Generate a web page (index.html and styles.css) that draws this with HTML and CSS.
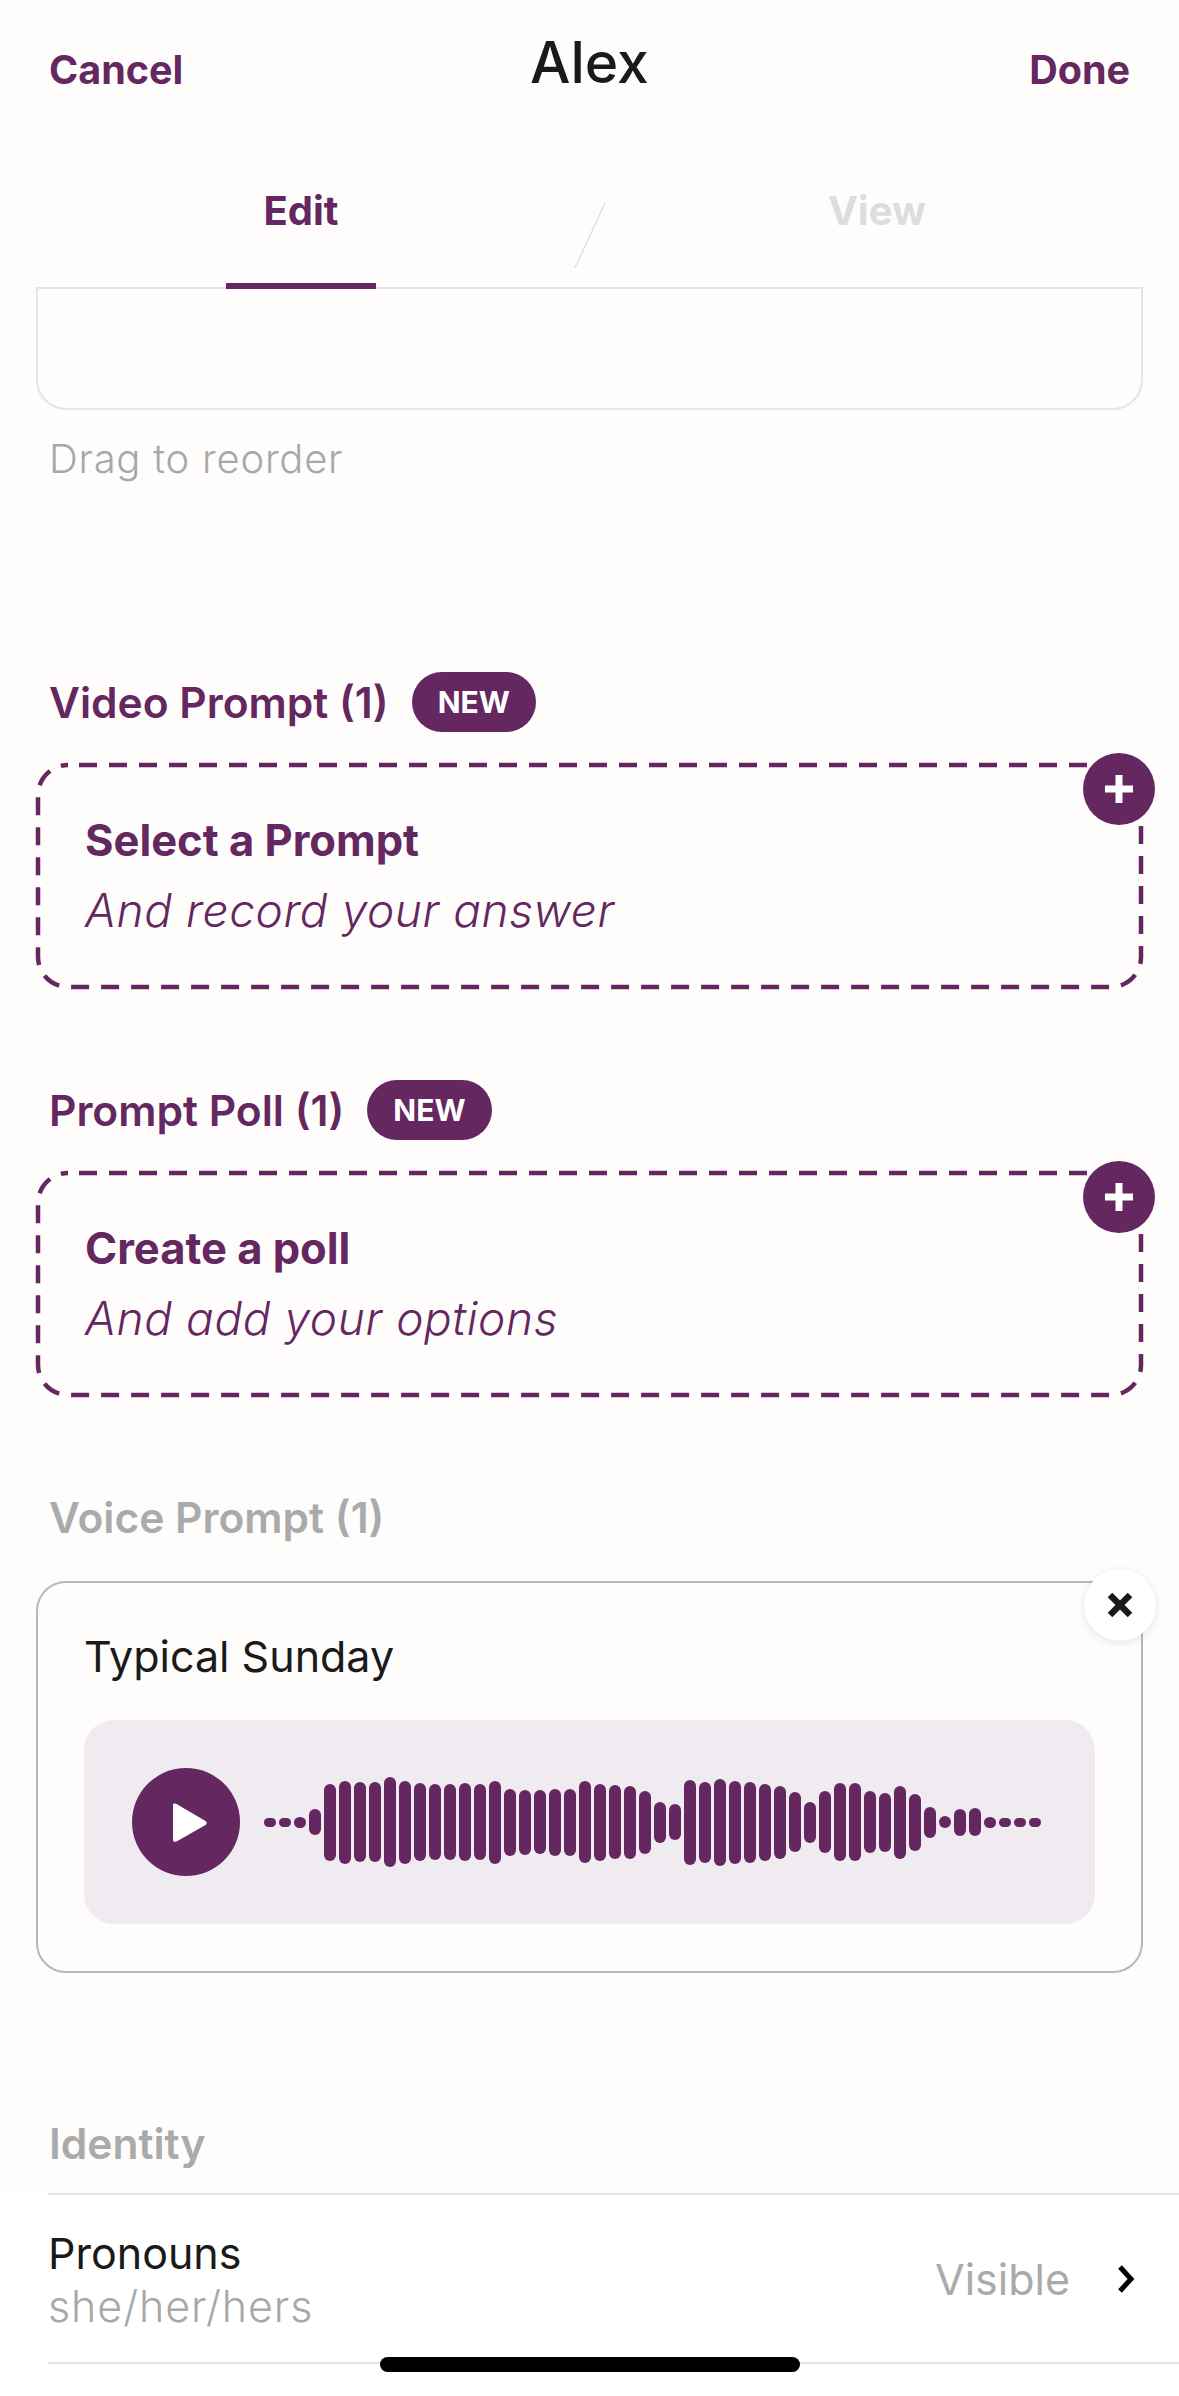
FILE: index.html
```html
<!DOCTYPE html>
<html lang="en">

<head>
    <meta charset="UTF-8">
    <meta name="viewport" content="width=device-width, initial-scale=1.0">
    <title>Alex</title>
    <link rel="stylesheet" href="styles.css">
</head>

<body>
    <div class="header">
        <div class="topbar">
            <span class="topbar-link">Cancel</span>
            <span class="topbar-title">Alex</span>
            <span class="topbar-link topbar-done">Done</span>
        </div>
        <div class="tabs">
            <div class="tab tab-active">Edit</div>
            <div class="tab">View</div>
            <svg class="tab-slash" width="32" height="67" viewBox="0 0 32 67">
                <line x1="31" y1="1" x2="1" y2="66" stroke="#dcdcdc" stroke-width="1.2" />
            </svg>
        </div>
    </div>

    <div class="photos-card"></div>
    <p class="hint">Drag to reorder</p>

    <div class="section-title section-first">
        <span>Video Prompt (1)</span>
        <span class="badge">NEW</span>
    </div>
    <div class="add-card">
        <svg class="dash"><rect width="100%" height="100%" rx="30" ry="30" /></svg>
        <div class="add-name">Select a Prompt</div>
        <div class="add-sub">And record your answer</div>
        <div class="round-btn round-plus">
            <svg width="30" height="30" viewBox="0 0 30 30"><path d="M15 1v28M1 15h28" stroke="#fff" stroke-width="7" /></svg>
        </div>
    </div>

    <div class="section-title section-next">
        <span>Prompt Poll (1)</span>
        <span class="badge">NEW</span>
    </div>
    <div class="add-card">
        <svg class="dash"><rect width="100%" height="100%" rx="30" ry="30" /></svg>
        <div class="add-name">Create a poll</div>
        <div class="add-sub">And add your options</div>
        <div class="round-btn round-plus">
            <svg width="30" height="30" viewBox="0 0 30 30"><path d="M15 1v28M1 15h28" stroke="#fff" stroke-width="7" /></svg>
        </div>
    </div>

    <div class="section-title section-muted">Voice Prompt (1)</div>
    <div class="voice-card">
        <div class="voice-name">Typical Sunday</div>
        <div class="player">
            <div class="play-btn">
                <svg width="38" height="41" viewBox="0 0 38 41"><path d="M3 3.5v34c0 2 1.500 3 3.500 2l29-16.500c1.500-1 1.500-3 0-4L6.500 2C4.500 1 3 1.500 3 3.500z" fill="#fff" /></svg>
            </div>
            <div class="wave">
                <i style="height:9px"></i><i style="height:9px"></i><i style="height:11px"></i><i style="height:26px"></i><i style="height:77px"></i><i style="height:83px"></i><i style="height:80px"></i><i style="height:80px"></i><i style="height:90px"></i><i style="height:83px"></i><i style="height:78px"></i><i style="height:76px"></i><i style="height:76px"></i><i style="height:78px"></i><i style="height:76px"></i><i style="height:83px"></i><i style="height:67px"></i><i style="height:65px"></i><i style="height:64px"></i><i style="height:67px"></i><i style="height:67px"></i><i style="height:82px"></i>
                <i style="height:77px"></i><i style="height:74px"></i><i style="height:73px"></i><i style="height:63px"></i><i style="height:41px"></i><i style="height:36px"></i><i style="height:85px"></i><i style="height:81px"></i><i style="height:87px"></i><i style="height:83px"></i><i style="height:81px"></i><i style="height:77px"></i><i style="height:73px"></i><i style="height:60px"></i><i style="height:41px"></i><i style="height:62px"></i><i style="height:78px"></i><i style="height:78px"></i><i style="height:62px"></i><i style="height:59px"></i><i style="height:73px"></i><i style="height:57px"></i><i style="height:31px"></i><i style="height:12px"></i><i style="height:27px"></i><i style="height:28px"></i><i style="height:11px"></i><i style="height:9px"></i><i style="height:9px"></i><i style="height:9px"></i>
            </div>
        </div>
        <div class="round-btn round-close">
            <svg width="26" height="26" viewBox="0 0 26 26"><path d="M3 3l20 20M23 3L3 23" stroke="#1a1a1a" stroke-width="6.500" /></svg>
        </div>
    </div>

    <div class="section-title section-identity">Identity</div>
    <div class="list">
        <div class="list-row">
            <div class="row-text">
                <div class="row-name">Pronouns</div>
                <div class="row-value">she/her/hers</div>
            </div>
            <span class="row-state">Visible</span>
            <svg class="row-arrow" width="20" height="30" viewBox="0 0 20 30"><path d="M4 3l11 12L4 27" fill="none" stroke="#000" stroke-width="5" /></svg>
        </div>
    </div>

    <div class="home-bar"></div>
</body>

</html>
```

FILE: styles.css
```css
body {
    font-family: Inter, "Liberation Sans", sans-serif;
    margin: 0;
    padding: 0;
    width: 1179px;
    height: 2396px;
    overflow: hidden;
    position: relative;
    background-color: #fefdfc;
    color: #1a1a1a;
}

.header {
    height: 287px;
    border-bottom: 2px solid #e6e4e6;
    margin: 0 36px;
}

.topbar {
    display: grid;
    grid-template-columns: 1fr auto 1fr;
    align-items: start;
    padding: 0 13px;
    height: 169px;
}

.topbar-link {
    font-size: 39.5px;
    font-weight: 700;
    line-height: 48px;
    margin-top: 46px;
    color: #64275f;
}

.topbar-done {
    justify-self: end;
}

.topbar-title {
    font-size: 57px;
    font-weight: 500;
    line-height: 68px;
    margin-top: 29px;
}

.tabs {
    display: flex;
    position: relative;
    height: 118px;
}

.tab {
    width: 150px;
    height: 114px;
    margin-left: 190px;
    font-size: 40px;
    font-weight: 700;
    line-height: 84px;
    text-align: center;
    color: #dddddd;
}

.tab + .tab {
    margin-left: 426px;
}

.tab-active {
    color: #64275f;
    border-bottom: 6px solid #64275f;
}

.tab-slash {
    position: absolute;
    left: 538px;
    top: 33px;
}

.photos-card {
    height: 119px;
    margin: 0 36px;
    border: 2px solid #e6e4e6;
    border-top: none;
    border-radius: 0 0 30px 30px;
}

.hint {
    margin: 25px 0 0 49px;
    font-size: 40px;
    letter-spacing: 0.75px;
    line-height: 48px;
    font-weight: 300;
    color: #a8a8a8;
}

.section-title {
    display: flex;
    align-items: center;
    gap: 23px;
    height: 60px;
    padding-left: 49px;
    font-size: 42.5px;
    font-weight: 600;
    color: #64275f;
}

.section-first {
    margin-top: 189px;
}

.section-next {
    margin-top: 91px;
}

.section-muted {
    margin-top: 90px;
    color: #aaaaaa;
}

.section-identity {
    margin-top: 140px;
    color: #aaaaaa;
}

.badge {
    display: inline-block;
    height: 60px;
    padding: 0 26px;
    border-radius: 30px;
    background-color: #64275f;
    color: #fff;
    font-size: 30px;
    font-weight: 700;
    line-height: 60px;
}

.add-card {
    position: relative;
    height: 226px;
    margin: 31px 36px 0;
    padding-left: 49px;
}

.dash {
    position: absolute;
    left: 2px;
    top: 2px;
    width: calc(100% - 4px);
    height: calc(100% - 4px);
    overflow: visible;
}

.dash rect {
    fill: none;
    stroke: #64275f;
    stroke-width: 4.5;
    stroke-dasharray: 18 12;
    stroke-dashoffset: 19;
}

.add-name {
    padding-top: 52px;
    font-size: 43.5px;
    font-weight: 700;
    line-height: 50px;
    color: #64275f;
}

.add-sub {
    margin-top: 19px;
    font-size: 46px;
    font-style: italic;
    font-weight: 300;
    letter-spacing: 0.6px;
    line-height: 52px;
    color: #64275f;
}

.round-btn {
    position: absolute;
    top: -10px;
    right: -12px;
    width: 72px;
    height: 72px;
    border-radius: 50%;
    display: flex;
    align-items: center;
    justify-content: center;
}

.round-plus {
    background-color: #64275f;
}

.round-close {
    top: -14px;
    right: -15px;
    background-color: #fff;
    box-shadow: 0 2px 8px rgba(0, 0, 0, 0.1);
}

.voice-card {
    position: relative;
    height: 388px;
    margin: 34px 36px 0;
    padding: 0 46px;
    border: 2px solid #b8b8b8;
    border-radius: 30px;
}

.voice-name {
    padding-top: 47px;
    font-size: 43px;
    line-height: 52px;
}

.player {
    display: flex;
    align-items: center;
    height: 204px;
    margin-top: 38px;
    padding-left: 48px;
    border-radius: 30px;
    background-color: #f0ebf1;
}

.play-btn {
    width: 108px;
    height: 108px;
    border-radius: 50%;
    background-color: #64275f;
    display: flex;
    align-items: center;
    justify-content: center;
    padding-left: 6px;
    box-sizing: border-box;
}

.wave {
    display: flex;
    align-items: center;
    gap: 3.5px;
    margin-left: 24px;
}

.wave i {
    display: block;
    width: 11.5px;
    border-radius: 6px;
    background-color: #64275f;
}

.list {
    margin-top: 20px;
    padding-left: 48px;
    height: 203px;
    background-color: #fff;
}

.list-row {
    display: flex;
    align-items: center;
    height: 167px;
    padding-right: 43px;
    border-top: 2px solid #e6e4e6;
    border-bottom: 2px solid #e6e4e6;
}

.row-text {
    flex: 1;
}

.row-name {
    font-size: 43px;
    line-height: 52px;
}

.row-value {
    margin-top: 3px;
    font-size: 43px;
    font-weight: 300;
    letter-spacing: 0.9px;
    line-height: 48px;
    color: #a8a8a8;
}

.row-state {
    font-size: 43px;
    color: #aaaaaa;
    margin-right: 46px;
}

.home-bar {
    position: absolute;
    left: 380px;
    top: 2357px;
    width: 420px;
    height: 15px;
    border-radius: 8px;
    background-color: #000;
}
```
